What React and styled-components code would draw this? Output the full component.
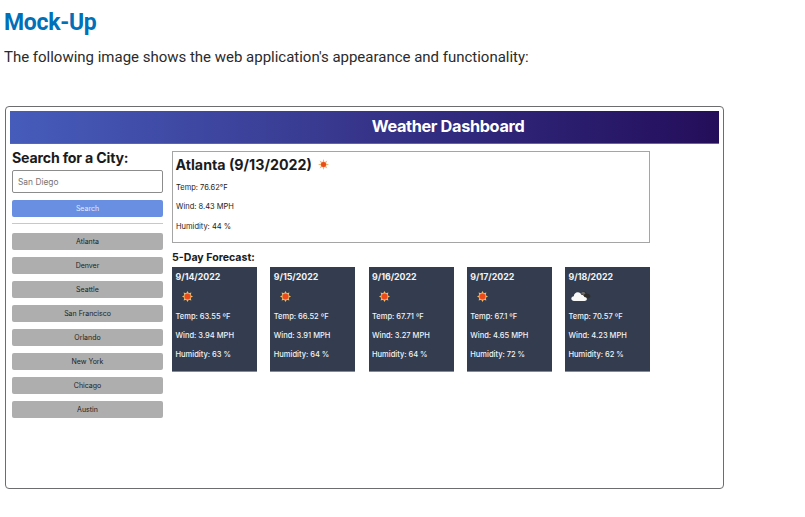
import React from 'react';
import styled, { createGlobalStyle } from 'styled-components';

const GlobalStyle = createGlobalStyle`
  * { box-sizing: border-box; }
  body { margin: 0; background: #fff; }
  h1, h2, h3, h4, p, ul { margin: 0; padding: 0; }
`;

const Page = styled.main`
  width: 805px;
  height: 517px;
  padding: 8px 0 0 5px;
  overflow: hidden;
  font-family: Roboto, sans-serif;
`;

const SectionTitle = styled.h2`
  margin-left: -1px;
  font-size: 23px;
  font-weight: 700;
  line-height: 30px;
  letter-spacing: -0.3px;
  color: #0070b8;
`;

const Intro = styled.p`
  margin: 9px 0 39px -1px;
  font-size: 15px;
  line-height: 20px;
  letter-spacing: -0.01px;
  color: #2b2b2b;
`;

const Frame = styled.section`
  width: 719px;
  height: 383px;
  padding: 4px;
  border: 1px solid #6d6d70;
  border-radius: 4px;
  font-family: Inter, sans-serif;
  color: #1b1b1d;
`;

const Banner = styled.header`
  height: 33px;
  padding-left: 167px;
  background: linear-gradient(90deg, #465cbb 0%, #3a3d94 40%, #2c2072 75%, #240e5a 100%);
  border-bottom: 1px solid #6a62a0;
`;

const BannerTitle = styled.h1`
  text-align: center;
  font-size: 16.3px;
  font-weight: 700;
  line-height: 31px;
  letter-spacing: -0.35px;
  color: #fff;
`;

const Columns = styled.div`
  display: flex;
  gap: 9px;
  padding-left: 2px;
`;

const Sidebar = styled.aside`
  width: 151px;
  padding-top: 3px;
`;

const SearchTitle = styled.h3`
  height: 23px;
  font-size: 14.2px;
  font-weight: 700;
  line-height: 21px;
  letter-spacing: -0.2px;
  white-space: nowrap;
`;

const CityInput = styled.input`
  display: block;
  width: 151px;
  height: 23px;
  padding: 0 5px;
  border: 1px solid #8c8c8c;
  border-radius: 2px;
  font: 400 8.4px Inter, sans-serif;
  color: #222;
  &::placeholder { color: #757575; opacity: 1; }
`;

const Button = styled.button`
  display: block;
  width: 100%;
  height: 17px;
  padding: 0;
  border: 0;
  border-radius: 2px;
  font: 400 7px/17px Inter, sans-serif;
  text-align: center;
  color: ${({ $primary }) => ($primary ? '#e2eaff' : '#222')};
  background: ${({ $primary }) => ($primary ? '#688fe2' : '#aeaeae')};
`;

const SearchArea = styled.form`
  display: grid;
  gap: 7px;
  padding-bottom: 6px;
  border-bottom: 1px solid #c8c8c8;
`;

const History = styled.nav`
  display: grid;
  gap: 7px;
  padding-top: 9px;
`;

const Main = styled.div`
  width: 478px;
  padding-top: 7px;
`;

const Current = styled.article`
  height: 92px;
  padding: 2px 3px 0;
  border: 1px solid #a5a5a5;
`;

const CurrentTitle = styled.h3`
  display: flex;
  align-items: center;
  gap: 6px;
  height: 24px;
  margin-left: -0.5px;
  padding-bottom: 3px;
  font-size: 14.25px;
  font-weight: 700;
  line-height: 20px;
`;

const Reading = styled.p`
  font-size: 7.5px;
  font-weight: ${({ $strong }) => ($strong ? 500 : 400)};
  line-height: ${({ $strong }) => ($strong ? 19.2 : 19.3)}px;
  white-space: nowrap;
`;

const ForecastTitle = styled.h3`
  height: 24px;
  padding-top: 5px;
  font-size: 10.6px;
  font-weight: 700;
  line-height: 20px;
`;

const Forecast = styled.div`
  display: grid;
  grid-template-columns: repeat(5, 85px);
  justify-content: space-between;
`;

const Card = styled.article`
  height: 105px;
  padding: 1px 3.5px 0;
  border-bottom: 1px solid #858a92;
  background: #333d4f;
  color: #f2f3f5;
`;

const CardDate = styled.h4`
  height: 18px;
  font-size: 8.8px;
  font-weight: 700;
  line-height: 17px;
`;

const IconSlot = styled.div`
  display: flex;
  align-items: center;
  height: 21px;
  padding: 0 0 1px ${({ $cloud }) => ($cloud ? 2 : 6.5)}px;
`;

const Icon = styled.svg`
  display: block;
  flex: none;
`;

function Sun({ fill, core = 2.7, spread = 1.9 }) {
  const points = Array.from({ length: 16 }, (_, i) => {
    const radius = i % 2 ? 5 - spread : 5;
    const angle = (i * Math.PI) / 8;
    return `${(5 + radius * Math.sin(angle)).toFixed(2)},${(5 - radius * Math.cos(angle)).toFixed(2)}`;
  }).join(' ');
  return (
    <Icon width="11" height="11" viewBox="0 0 10 10">
      <polygon points={points} fill={fill} />
      <circle cx="5" cy="5" r={core} fill="#ed4a1c" />
    </Icon>
  );
}

function Clouds() {
  return (
    <Icon width="20" height="11" viewBox="0 0 20 11">
      <path d="M10 3C10.500 1 12 .2 13.500.6c1.200.2 1.800 1 2 1.900 2 0 3.700 1 3.900 2.500C19.500 6.500 18 7.400 16.500 7.400L11 6Z" fill="#2d2c2b" />
      <path d="M10 2.500C11 .6 13.500.6 14.500 2.400L12.500 4Z" fill="#6b6b6b" />
      <path d="M3 10C1.600 10 .3 9 .3 7.600.3 6.200 1.500 5.300 2.800 5.200 3 3 4.500 1.300 6.800 1.300c1.800 0 3 1 3.500 2.400C12 3.600 13.200 4.800 13.300 6c1.500 0 2.600.8 2.600 2S14.800 10 13.500 10Z" fill="#f8f8f8" />
    </Icon>
  );
}

const cities = ['Atlanta', 'Denver', 'Seattle', 'San Francisco', 'Orlando', 'New York', 'Chicago', 'Austin'];

const days = [
  { date: '9/14/2022', temp: '63.55', wind: '3.94', humidity: '63' },
  { date: '9/15/2022', temp: '66.52', wind: '3.91', humidity: '64' },
  { date: '9/16/2022', temp: '67.71', wind: '3.27', humidity: '64' },
  { date: '9/17/2022', temp: '67.1', wind: '4.65', humidity: '72' },
  { date: '9/18/2022', temp: '70.57', wind: '4.23', humidity: '62', cloud: true },
];

export default function App() {
  return (
    <Page>
      <GlobalStyle />
      <SectionTitle>Mock-Up</SectionTitle>
      <Intro>The following image shows the web application's appearance and functionality:</Intro>
      <Frame>
        <Banner>
          <BannerTitle>Weather Dashboard</BannerTitle>
        </Banner>
        <Columns>
          <Sidebar>
            <SearchTitle>Search for a City:</SearchTitle>
            <SearchArea>
              <CityInput placeholder="San Diego" />
              <Button type="button" $primary>Search</Button>
            </SearchArea>
            <History>
              {cities.map((city) => (
                <Button type="button" key={city}>{city}</Button>
              ))}
            </History>
          </Sidebar>
          <Main>
            <Current>
              <CurrentTitle>
                Atlanta (9/13/2022)
                <Sun fill="#efae60" core={2.3} spread={2.7} />
              </CurrentTitle>
              <Reading>Temp: 76.62°F</Reading>
              <Reading>Wind: 8.43 MPH</Reading>
              <Reading>Humidity: 44 %</Reading>
            </Current>
            <ForecastTitle>5-Day Forecast:</ForecastTitle>
            <Forecast>
              {days.map((day) => (
                <Card key={day.date}>
                  <CardDate>{day.date}</CardDate>
                  <IconSlot $cloud={day.cloud}>{day.cloud ? <Clouds /> : <Sun fill="#f3bd68" />}</IconSlot>
                  <Reading $strong>Temp: {day.temp} ºF</Reading>
                  <Reading $strong>Wind: {day.wind} MPH</Reading>
                  <Reading $strong>Humidity: {day.humidity} %</Reading>
                </Card>
              ))}
            </Forecast>
          </Main>
        </Columns>
      </Frame>
    </Page>
  );
}
